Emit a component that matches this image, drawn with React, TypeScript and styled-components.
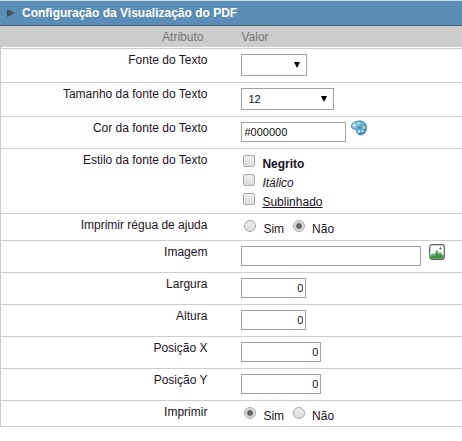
import React, { useState } from 'react';
import styled, { createGlobalStyle } from 'styled-components';

const GlobalStyle = createGlobalStyle`
  * { box-sizing: border-box; }
  body {
    margin: 0;
    background: #fff;
    color: #1c1424;
    font: 12px/16px "Liberation Sans", Arial, sans-serif;
  }
`;

const Panel = styled.form`
  width: 100%;
  padding-bottom: 14px;
`;

const TitleBar = styled.h1`
  display: flex;
  align-items: center;
  gap: 7px;
  height: 26px;
  margin: 0;
  padding: 0 7px;
  border-top: 1px solid #c3dcea;
  border-bottom: 1px solid #3f5c75;
  background: #5b8db6;
  color: #fff;
  font-size: 12px;
  line-height: 16px;
`;

const Arrow = styled.svg`
  width: 8px;
  height: 8px;
  fill: #44525e;
`;

const Table = styled.table`
  width: 100%;
  table-layout: fixed;
  border-collapse: separate;
  border-spacing: 0;
  border-left: 1px solid #ccc;
`;

const HeadCell = styled.th<{ $label?: boolean }>`
  width: ${p => (p.$label ? '45%' : 'auto')};
  height: 23px;
  padding: ${p => (p.$label ? '3px 5px 3px 0' : '3px 0 3px 33px')};
  border-bottom: 1px solid #ccc;
  background: #ccc linear-gradient(#fff, #fff) bottom / 100% 1px no-repeat;
  background-clip: padding-box;
  color: #777;
  font-weight: normal;
  text-align: ${p => (p.$label ? 'right' : 'left')};
`;

const LabelCell = styled.th`
  padding: 3px 1px 0 0;
  border-bottom: 1px solid #ccc;
  font-weight: normal;
  text-align: right;
  vertical-align: top;
  white-space: nowrap;
`;

const ValueCell = styled.td<{ $height: number }>`
  height: ${p => p.$height}px;
  padding: 5px 0 0 33px;
  border-bottom: 1px solid #ccc;
  vertical-align: top;
`;

const Line = styled.div`
  display: flex;
  align-items: flex-start;
`;

const SelectBox = styled.div<{ $width: number }>`
  position: relative;
  width: ${p => p.$width}px;
  height: 22px;
`;

const Select = styled.select`
  display: block;
  width: 100%;
  height: 22px;
  padding: 0 20px 0 6px;
  appearance: none;
  border: 1px solid #a0a0a0;
  border-radius: 0;
  background: #fff;
  color: #111;
  font: 11px "Liberation Sans", Arial, sans-serif;
`;

const SelectArrow = styled.svg`
  position: absolute;
  top: 8px;
  right: 7px;
  width: 6px;
  height: 6px;
  pointer-events: none;
`;

const TextInput = styled.input<{ $width: number; $numeric?: boolean }>`
  display: block;
  width: ${p => p.$width}px;
  height: 20px;
  padding: 1px 2px;
  border: 1px solid #a0a0a0;
  border-radius: 0;
  background: #fff;
  color: #111;
  font: 11px "Liberation Sans", Arial, sans-serif;
  text-align: ${p => (p.$numeric ? 'right' : 'left')};
`;

const IconButton = styled.button<{ $gap: number }>`
  flex: none;
  width: 16px;
  height: 16px;
  margin: -2px 0 0 ${p => p.$gap}px;
  padding: 0;
  border: 0;
  background: none;
  cursor: pointer;
  svg { display: block; }
`;

const Option = styled.label`
  display: flex;
  align-items: flex-start;
  gap: 7px;
  height: 19px;
`;

const OptionText = styled.span<{ $kind?: 'bold' | 'italic' | 'underline' }>`
  padding-top: 1px;
  font-weight: ${p => (p.$kind === 'bold' ? 'bold' : 'normal')};
  font-style: ${p => (p.$kind === 'italic' ? 'italic' : 'normal')};
  text-decoration: ${p => (p.$kind === 'underline' ? 'underline' : 'none')};
`;

const CheckStack = styled.div`
  padding: 1px 0 0 2px;
`;

const RadioLine = styled.div`
  display: flex;
  gap: 9px;
  padding: 1px 0 0 3px;
`;

const Check = styled.input`
  width: 12px;
  height: 12px;
  margin: 0;
  appearance: none;
  border: 1px solid #a8a8a8;
  border-radius: 2px;
  background: linear-gradient(#ededed, #dcdcdc);
  &:checked { background: #666; box-shadow: inset 0 0 0 2px #e6e6e6; }
`;

const Radio = styled.input`
  width: 12px;
  height: 12px;
  margin: 0;
  appearance: none;
  border: 1px solid #a8a8a8;
  border-radius: 50%;
  background: linear-gradient(#ededed, #dcdcdc);
  &:checked { background: radial-gradient(circle, #606060 0 2px, #e4e4e4 4px); }
`;

function PaletteIcon() {
  return (
    <svg width="16" height="16" viewBox="0 0 16 16" aria-hidden="true">
      <defs>
        <linearGradient id="palette" x1="0" y1="0" x2="1" y2="1">
          <stop offset="0" stopColor="#9bd2e8" />
          <stop offset="0.5" stopColor="#66abd3" />
          <stop offset="1" stopColor="#2870a6" />
        </linearGradient>
      </defs>
      <path d="M1 4C2 2 5 1.500 7 1c5-1 8.500 2 8.500 6.500S13 15 9.500 15C6.500 15 5.500 12.500 5.500 10.500 5 9 2.500 10 1 8 .2 7 .3 5 1 4Z" fill="url(#palette)" stroke="#4385ae" strokeWidth=".8" />
      <ellipse cx="3.500" cy="5.500" rx="1.700" ry="1.200" fill="#e8f8fc" />
      <circle cx="7.500" cy="3.500" r="1.200" fill="#b9e4ee" />
      <circle cx="11.500" cy="4" r="1.500" fill="#74bd91" />
      <circle cx="13" cy="7.500" r="1.500" fill="#b5df91" />
      <circle cx="11.500" cy="11" r="1.500" fill="#91d9ef" />
      <circle cx="8" cy="11.500" r="1.300" fill="#d0f2fa" />
      <path d="M6 7c1-1 3-1 4 0s0 2-1 2-2-1-3-2Z" fill="#4c98c8" />
    </svg>
  );
}

function PictureIcon() {
  return (
    <svg width="16" height="16" viewBox="0 0 16 16" aria-hidden="true">
      <rect x=".7" y=".7" width="14.600" height="14.600" rx="2.500" fill="#fff" stroke="#555d57" strokeWidth="1.200" />
      <path d="M1.500 11.500 3.500 9 5 10.500 8 5.500l2 3.500 1.500-1 3 3.500v2q0 1-1 1h-11q-1 0-1-1Z" fill="#66ad63" />
      <path d="m1.500 12.500 2-1 2 1 2-3 2 2 2-1 3 2v1q0 1-1 1h-11q-1 0-1-1Z" fill="#3f8c48" />
      <path d="M11.500 3v3M10 4.500h3" stroke="#a3b8a0" />
      <circle cx="11.500" cy="4.500" r=".9" fill="#718c6c" />
    </svg>
  );
}

function DropDown({ id, width, options }: { id: string; width: number; options: string[] }) {
  return (
    <SelectBox $width={width}>
      <Select id={id} defaultValue={options[0]}>
        {options.map(o => <option key={o} value={o}>{o}</option>)}
      </Select>
      <SelectArrow viewBox="0 0 6 6" aria-hidden="true"><path d="M0 0h6L3 6Z" /></SelectArrow>
    </SelectBox>
  );
}

function YesNo({ name, initial, labelId }: { name: string; initial: string; labelId: string }) {
  const [value, setValue] = useState(initial);
  return (
    <RadioLine role="radiogroup" aria-labelledby={labelId}>
      {['Sim', 'Não'].map(option => (
        <Option key={option}>
          <Radio type="radio" name={name} checked={value === option} onChange={() => setValue(option)} />
          <OptionText>{option}</OptionText>
        </Option>
      ))}
    </RadioLine>
  );
}

function Row({ id, label, height = 32, group, children }: {
  id: string; label: string; height?: number; group?: boolean; children: React.ReactNode;
}) {
  return (
    <tr>
      <LabelCell scope="row" id={`${id}-label`}>
        {group ? label : <label htmlFor={id}>{label}</label>}
      </LabelCell>
      <ValueCell $height={height}>{children}</ValueCell>
    </tr>
  );
}

const measures = [
  { id: 'largura', label: 'Largura', width: 65 },
  { id: 'altura', label: 'Altura', width: 65 },
  { id: 'posicao-x', label: 'Posição X', width: 80 },
  { id: 'posicao-y', label: 'Posição Y', width: 80 },
];

export default function App() {
  return (
    <>
      <GlobalStyle />
      <Panel>
        <TitleBar>
          <Arrow viewBox="0 0 8 8" aria-hidden="true"><path d="M0 0 8 4 0 8Z" /></Arrow>
          Configuração da Visualização do PDF
        </TitleBar>
        <Table>
          <thead>
            <tr>
              <HeadCell scope="col" $label>Atributo</HeadCell>
              <HeadCell scope="col">Valor</HeadCell>
            </tr>
          </thead>
          <tbody>
            <Row id="fonte" label="Fonte do Texto" height={34}>
              <DropDown id="fonte" width={66} options={['', 'Arial', 'Courier', 'Times']} />
            </Row>
            <Row id="tamanho" label="Tamanho da fonte do Texto" height={34}>
              <DropDown id="tamanho" width={93} options={['12', '14', '16', '18']} />
            </Row>
            <Row id="cor" label="Cor da fonte do Texto">
              <Line>
                <TextInput id="cor" $width={105} defaultValue="#000000" />
                <IconButton type="button" $gap={5} aria-label="Escolher cor"><PaletteIcon /></IconButton>
              </Line>
            </Row>
            <Row id="estilo" label="Estilo da fonte do Texto" height={65} group>
              <CheckStack role="group" aria-labelledby="estilo-label">
                <Option><Check type="checkbox" /><OptionText $kind="bold">Negrito</OptionText></Option>
                <Option><Check type="checkbox" /><OptionText $kind="italic">Itálico</OptionText></Option>
                <Option><Check type="checkbox" /><OptionText $kind="underline">Sublinhado</OptionText></Option>
              </CheckStack>
            </Row>
            <Row id="regua" label="Imprimir régua de ajuda" height={27} group>
              <YesNo name="regua" initial="Não" labelId="regua-label" />
            </Row>
            <Row id="imagem" label="Imagem">
              <Line>
                <TextInput id="imagem" $width={180} />
                <IconButton type="button" $gap={8} aria-label="Escolher imagem"><PictureIcon /></IconButton>
              </Line>
            </Row>
            {measures.map(m => (
              <Row key={m.id} id={m.id} label={m.label}>
                <TextInput id={m.id} $width={m.width} $numeric defaultValue="0" />
              </Row>
            ))}
            <Row id="imprimir" label="Imprimir" height={26} group>
              <YesNo name="imprimir" initial="Sim" labelId="imprimir-label" />
            </Row>
          </tbody>
        </Table>
      </Panel>
    </>
  );
}
